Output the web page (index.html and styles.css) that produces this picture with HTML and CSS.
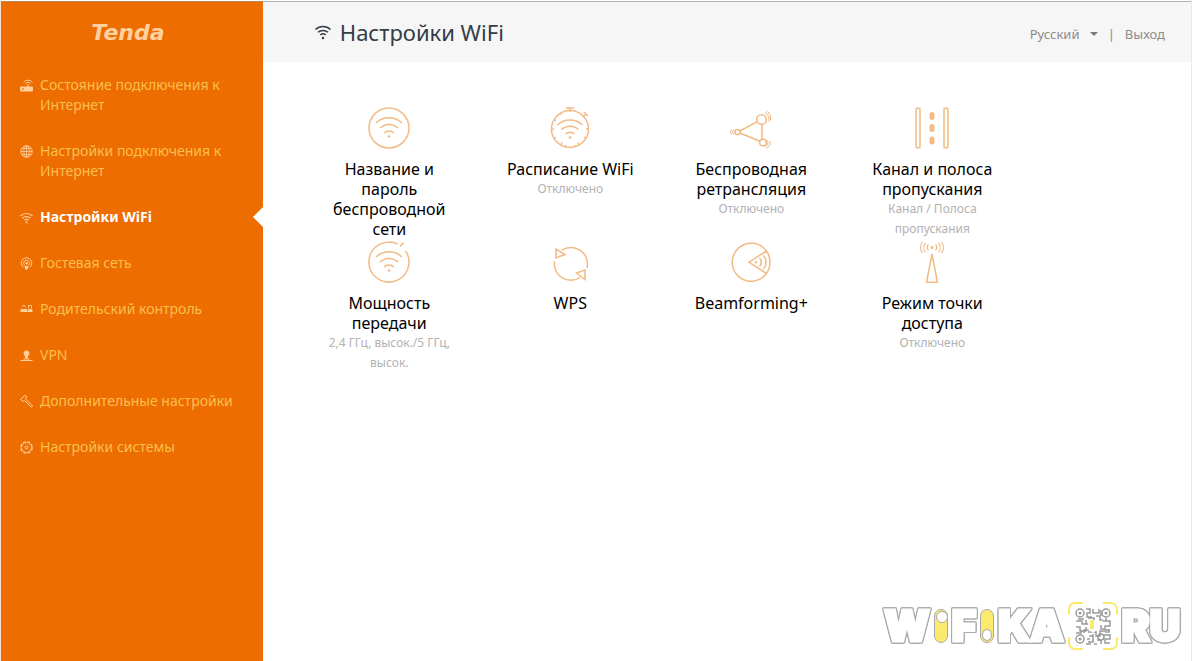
FILE: index.html
```html
<!DOCTYPE html>
<html lang="ru">
<head>
    <meta charset="UTF-8">
    <meta name="viewport" content="width=device-width, initial-scale=1.0">
    <title>Настройки WiFi</title>
    <link rel="stylesheet" href="styles.css">
</head>
<body>
<div class="page">
    <aside class="sidebar">
        <a href="#" class="logo">Tenda</a>
        <nav class="menu">
            <a href="#" class="menu-item">
                <svg class="menu-icon" viewBox="0 0 13 13">
                    <path d="M1 8h11a1 1 0 0 1 1 1v2a1 1 0 0 1-1 1H1a1 1 0 0 1-1-1V9a1 1 0 0 1 1-1z" fill="currentColor"/>
                    <path d="M2 10h2" stroke="#ed6d00"/>
                    <path d="M8 8V5M5.500 4.800a3 3 0 0 1 5 0M3.500 3.500a5.500 5.500 0 0 1 9 0"/>
                </svg>
                <span>Состояние подключения к Интернет</span>
            </a>
            <a href="#" class="menu-item">
                <svg class="menu-icon" viewBox="0 0 13 13">
                    <circle cx="6.500" cy="6.500" r="5.700"/>
                    <ellipse cx="6.500" cy="6.500" rx="2.700" ry="5.500"/>
                    <path d="M1 6.500h11M6.500 1v11M2 3.500h9M2 9.500h9" stroke-width="0.800"/>
                </svg>
                <span>Настройки подключения к Интернет</span>
            </a>
            <a href="#" class="menu-item active">
                <svg class="menu-icon" viewBox="0 0 13 13">
                    <path d="M0.500 5a8.500 8.500 0 0 1 12 0M2.500 7.200a5.800 5.800 0 0 1 8 0M4.500 9.300a3 3 0 0 1 4 0" stroke-width="1.200"/>
                    <circle cx="6.500" cy="11.300" r="0.600" fill="currentColor"/>
                </svg>
                <span>Настройки WiFi</span>
            </a>
            <a href="#" class="menu-item">
                <svg class="menu-icon" viewBox="0 0 13 13">
                    <path d="M3.500 10.500a5.300 5.300 0 1 1 6 0M4.500 8.500a3 3 0 1 1 4 0"/>
                    <circle cx="6.500" cy="6.200" r="1.300" fill="currentColor" stroke="none"/>
                    <path d="M4.500 9h4L7.800 12.500H5.200z" fill="currentColor" stroke="none"/>
                </svg>
                <span>Гостевая сеть</span>
            </a>
            <a href="#" class="menu-item">
                <svg class="menu-icon" viewBox="0 0 13 13">
                    <path d="M0.500 9V6.500l2-1 1.500 1 1.500-1 2 1V9zM8 9V7l1-1h2l1.500 1v2z" fill="currentColor" stroke="none"/>
                    <path d="M2.500 4a1.500 1.500 0 0 1 3 0M8.500 5.500V2.500h3v3" stroke-width="0.900"/>
                </svg>
                <span>Родительский контроль</span>
            </a>
            <a href="#" class="menu-item">
                <svg class="menu-icon" viewBox="0 0 13 13">
                    <path d="M6.500 1.500a3 3 0 0 1 1.500 5.600V9.500H5V7.100a3 3 0 0 1 1.500-5.600z" fill="currentColor" stroke="none"/>
                    <path d="M0.500 11.500h12M3.500 10h6" stroke-width="1.200"/>
                </svg>
                <span>VPN</span>
            </a>
            <a href="#" class="menu-item">
                <svg class="menu-icon" viewBox="0 0 13 13">
                    <path d="M0.500 4.500 4.500 0.500 7 1.500 5.500 3.200 6.200 4.500 12.500 11 11.300 12.300 4.800 5.800 3 6.500z"/>
                </svg>
                <span>Дополнительные настройки</span>
            </a>
            <a href="#" class="menu-item">
                <svg class="menu-icon" viewBox="0 0 13 13">
                    <circle cx="6.500" cy="6.500" r="5.700" stroke-width="1.200" stroke-dasharray="3 1.480"/>
                    <circle cx="6.500" cy="6.500" r="4.900" stroke-width="0.700"/>
                    <circle cx="6.500" cy="6.500" r="1.500"/>
                </svg>
                <span>Настройки системы</span>
            </a>
        </nav>
    </aside>

    <div class="content">
        <header class="header">
            <h1 class="title">
                <svg class="title-icon" viewBox="0 0 18 18">
                    <path d="M1.500 6.500a11 11 0 0 1 15 0M4 9.300a7.500 7.500 0 0 1 10 0M6.300 12a4 4 0 0 1 5.400 0"/>
                    <circle cx="9" cy="15" r="1.200" fill="currentColor" stroke="none"/>
                </svg>
                Настройки WiFi
            </h1>
            <div class="header-links">
                <select class="lang" aria-label="Язык">
                    <option>Русский</option>
                </select>
                <span class="caret"></span>
                <span class="divider">|</span>
                <a href="#" class="logout">Выход</a>
            </div>
        </header>

        <main class="tiles">
            <a href="#" class="tile">
                <svg class="tile-icon" viewBox="0 0 42 42">
                    <circle cx="21" cy="21" r="20"/>
                    <path d="M8 16a19 19 0 0 1 26 0M12 21a13 13 0 0 1 18 0M16 26a7.500 7.500 0 0 1 10 0"/>
                    <circle cx="21" cy="29.500" r="1.300" fill="currentColor" stroke="none"/>
                </svg>
                <span class="tile-name">Название и пароль беспроводной сети</span>
            </a>
            <a href="#" class="tile">
                <svg class="tile-icon" viewBox="0 0 42 42">
                    <circle cx="21" cy="22" r="18.500"/>
                    <path d="M17 1h8M21 1v4M35 5l4 4M37 7l-3 3M2.500 22h2.500M37 22h2.500M5 31.500l2-1.500M37 31.500l-2-1.500M12 38l1-2.500M30 38l-1-2.500M16 40l0.500-2M26 40l-0.500-2M5 12.500l2 1M11.500 6l1 2"/>
                    <path d="M8.500 18a18 18 0 0 1 25 0M12.500 22.500a12.500 12.500 0 0 1 17 0M16.500 27a7 7 0 0 1 9 0"/>
                    <circle cx="21" cy="30.500" r="1.300" fill="currentColor" stroke="none"/>
                </svg>
                <span class="tile-name">Расписание WiFi</span>
                <span class="tile-status">Отключено</span>
            </a>
            <a href="#" class="tile">
                <svg class="tile-icon" viewBox="0 0 42 42">
                    <circle cx="31.500" cy="12.500" r="4.800"/>
                    <circle cx="7.500" cy="25" r="2.600"/>
                    <circle cx="33" cy="35.500" r="3.300"/>
                    <path d="M10 24 27.200 14.700M10 26l20 8.200M32 17.300v15"/>
                    <path d="M35 5.500a7.500 7.500 0 0 1 3.700 9M37.500 4a10 10 0 0 1 3 9.500M37.500 33.500a5 5 0 0 1-2.500 6.500M40 34a7.500 7.500 0 0 1-3.500 7.500M3.500 22.500a5 5 0 0 0 0 5M1.500 22a6 6 0 0 0 0 6" stroke-width="1"/>
                </svg>
                <span class="tile-name">Беспроводная ретрансляция</span>
                <span class="tile-status">Отключено</span>
            </a>
            <a href="#" class="tile">
                <svg class="tile-icon" viewBox="0 0 42 42">
                    <rect x="5" y="1" width="4" height="40" rx="2"/>
                    <rect x="33" y="1" width="4" height="40" rx="2"/>
                    <g fill="currentColor" stroke="none">
                        <rect x="18.500" y="5" width="5" height="8" rx="2.500"/>
                        <rect x="18.500" y="17" width="5" height="8" rx="2.500"/>
                        <rect x="18.500" y="29.500" width="5" height="8" rx="2.500"/>
                    </g>
                </svg>
                <span class="tile-name">Канал и полоса пропускания</span>
                <span class="tile-status">Канал / Полоса пропускания</span>
            </a>
            <a href="#" class="tile">
                <svg class="tile-icon" viewBox="0 0 42 42">
                    <path d="M30 3.200A20 20 0 1 0 37.500 9.800M32 5.500 35.500 1.500"/>
                    <path d="M8 16a19 19 0 0 1 26 0M12 21a13 13 0 0 1 18 0M16 26a7.500 7.500 0 0 1 10 0"/>
                    <circle cx="21" cy="29.500" r="1.300" fill="currentColor" stroke="none"/>
                </svg>
                <span class="tile-name">Мощность передачи</span>
                <span class="tile-status">2,4 ГГц, высок./5 ГГц, высок.</span>
            </a>
            <a href="#" class="tile">
                <svg class="tile-icon" viewBox="0 0 42 42">
                    <path d="M12.500 9.500A16.500 16.500 0 0 1 38 27M31 36.500A16.500 16.500 0 0 1 5.500 20"/>
                    <path d="M7 8v9l9-3.500zM36 29v9.500L27.500 32z"/>
                </svg>
                <span class="tile-name">WPS</span>
            </a>
            <a href="#" class="tile">
                <svg class="tile-icon" viewBox="0 0 42 42">
                    <path d="M36.500 10A19 19 0 1 0 36.500 32.500"/>
                    <path d="M36.500 10 19 21.200l17.500 11.300A20 20 0 0 0 36.500 10z"/>
                    <path d="M29.500 17a6 6 0 0 1 0 8.500M33.500 14.500a10 10 0 0 1 0 13.500"/>
                    <circle cx="26" cy="21.200" r="1.300" fill="currentColor" stroke="none"/>
                </svg>
                <span class="tile-name">Beamforming+</span>
            </a>
            <a href="#" class="tile">
                <svg class="tile-icon" viewBox="0 0 42 42">
                    <path d="M21 13 15.500 41.300h11z"/>
                    <circle cx="21" cy="6.500" r="1.500" fill="currentColor" stroke="none"/>
                    <path d="M17.500 3.500a4.500 4.500 0 0 0 0 6M14.500 2a7 7 0 0 0 0 9M11.500 1a9 9 0 0 0 0 11M24.500 3.500a4.500 4.500 0 0 1 0 6M27.500 2a7 7 0 0 1 0 9M30.500 1a9 9 0 0 1 0 11" stroke-width="1.200"/>
                </svg>
                <span class="tile-name">Режим точки доступа</span>
                <span class="tile-status">Отключено</span>
            </a>
        </main>
    </div>

    <div class="watermark">
        <span class="letters">W</span>
        <span class="pill"></span>
        <span class="letters">F</span>
        <span class="pill pill-down"></span>
        <span class="letters">KA</span>
        <svg class="qr" viewBox="0 0 50 50">
            <path d="M1 14V8a6 6 0 0 1 6-6h8M35 2h8a6 6 0 0 1 6 6v6M49 36v6a6 6 0 0 1-6 6h-8M15 48H7a6 6 0 0 1-6-6v-6" fill="none" stroke="#fbea6e" stroke-width="2"/>
            <g fill="none" stroke="#9a9a9a" stroke-width="1.500">
                <circle cx="12" cy="12" r="4"/>
                <circle cx="38" cy="12" r="4"/>
                <circle cx="12" cy="38" r="4"/>
                <path d="M18 8h4v4h-3v4h5M25 8v4h6V8M28 15h4v4h3M8 20h6v3h4v-4M8 26h4v4h6v-4M16 32v-3h5M21 35h4v6h-5M20 31h8v4h4v-5h5M35 20h7v5h-5v4h5M29 39h4v4M36 34h6v4h-5v4h5M26 43h3M18 23h3M33 24v3M20 17h6v2M8 32h5v-3M19 38h3M25 33v6M38 17v3M41 28v3h-4M18 43h5M33 9v6M10 18h6M32 28h4"/>
                <circle cx="33" cy="36" r="3"/>
            </g>
            <path d="M20 19h10v9l-5 4-5-4z" fill="#fff"/>
            <path d="M22 19h4v9h-4z" fill="#fbea6e"/>
            <g fill="#9a9a9a">
                <circle cx="12" cy="12" r="1.500"/>
                <circle cx="38" cy="12" r="1.500"/>
                <circle cx="12" cy="38" r="1.500"/>
            </g>
        </svg>
        <span class="letters">RU</span>
    </div>
</div>
</body>
</html>
```
FILE: styles.css
```css
* {
    box-sizing: border-box;
}

body {
    margin: 0;
    font-family: 'Noto Sans', 'Open Sans', sans-serif;
    font-size: 14px;
    line-height: 20px;
    color: #000;
    background: #fff;
}

a {
    color: inherit;
    text-decoration: none;
}

svg {
    fill: none;
    stroke: currentColor;
    flex: none;
}

.page {
    position: relative;
    display: flex;
    min-height: 100vh;
    padding-top: 1px;
    border-left: 1px solid #f3e3d0;
    border-right: 1px solid #e8e8e8;
}

/* Боковое меню */
.sidebar {
    width: 22%;
    padding-top: 21px;
    background: #ed6d00;
    border-top: 1px solid #b08a68;
}

.logo {
    display: block;
    padding-right: 8px;
    font-family: 'DejaVu Sans', sans-serif;
    font-size: 22px;
    font-weight: bold;
    font-style: italic;
    text-align: center;
    color: #ffd0a0;
}

.menu {
    display: flex;
    flex-direction: column;
    padding-top: 19px;
}

.menu-item {
    position: relative;
    display: flex;
    gap: 7px;
    padding: 13px 20px 13px 19px;
    color: #fbbf4f;
}

.menu-icon {
    width: 13px;
    height: 13px;
    margin-top: 4px;
    color: #ffcf9c;
}

.menu-item.active {
    font-weight: bold;
    color: #fff;
}

.menu-item.active::after {
    content: "";
    position: absolute;
    top: 13px;
    right: 0;
    border: 10px solid transparent;
    border-right-color: #fff;
    border-left: 0;
}

/* Правая часть */
.content {
    flex: 1;
    border-top: 1px solid #b0b0b0;
}

.header {
    display: flex;
    justify-content: space-between;
    align-items: center;
    height: 60px;
    padding: 0 26px 0 51px;
    background: #f6f6f6;
}

.title {
    display: flex;
    align-items: center;
    gap: 8px;
    margin: 0;
    font-size: 22px;
    font-weight: normal;
    color: #333d47;
}

.title-icon {
    width: 18px;
    height: 18px;
    stroke-width: 1.5;
}

.header-links {
    display: flex;
    align-items: center;
    padding-top: 4px;
    font-size: 13px;
    color: #8c8c8c;
}

.lang {
    padding: 0;
    font: inherit;
    color: inherit;
    background: none;
    border: 0;
    appearance: none;
}

.caret {
    margin-left: 10px;
    border: 4px solid transparent;
    border-top-color: #777;
    border-bottom: 0;
}

.divider {
    margin: 0 10px;
}

.tiles {
    display: grid;
    grid-template-columns: repeat(4, 1fr);
    row-gap: 2px;
    max-width: 760px;
    padding: 45px 0 0 36px;
}

.tile {
    display: flex;
    flex-direction: column;
    align-items: center;
    padding: 0 22px;
    text-align: center;
}

.tile-icon {
    width: 42px;
    height: 42px;
    margin-bottom: 10px;
    stroke-width: 1.5;
    color: #f3ba84;
}

.tile-name {
    font-size: 16px;
}

.tile-status {
    font-size: 12px;
    color: #b2b2b2;
}

/* Водяной знак в углу страницы */
.watermark {
    position: absolute;
    right: 11px;
    bottom: 10px;
    display: flex;
    align-items: center;
    gap: 4px;
    font-family: Inter, sans-serif;
    font-size: 42px;
    font-weight: 900;
    line-height: 50px;
    color: #fff;
}

/* Толстые белые буквы с тонким серым контуром */
.letters {
    -webkit-text-stroke: 3px #fff;
    filter: drop-shadow(1px 0 0 #aaa) drop-shadow(-1px 0 0 #aaa) drop-shadow(0 1px 0 #aaa) drop-shadow(0 -1px 0 #aaa);
}

.pill {
    width: 14px;
    height: 34px;
    padding: 1px;
    background: #fbea6e;
    border: 1px solid #aaa;
    border-radius: 7px;
}

.pill::before {
    content: "";
    display: block;
    width: 10px;
    height: 10px;
    background: #fff;
    border: 1px solid #aaa;
    border-radius: 50%;
}

.pill-down {
    display: flex;
    align-items: flex-end;
}

.qr {
    width: 50px;
    height: 50px;
    stroke: none;
}
```
